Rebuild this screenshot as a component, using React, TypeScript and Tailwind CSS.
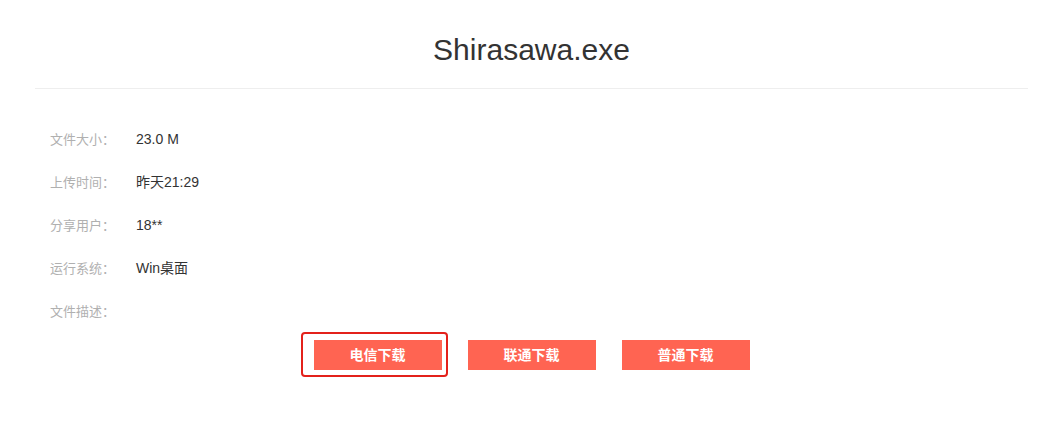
import * as React from "react";

const rows: { label: string; value: string }[] = [
  { label: "文件大小：", value: "23.0 M" },
  { label: "上传时间：", value: "昨天21:29" },
  { label: "分享用户：", value: "18**" },
  { label: "运行系统：", value: "Win桌面" },
  { label: "文件描述：", value: "" },
];

const buttons = ["电信下载", "联通下载", "普通下载"];

export default function App() {
  return (
    <div
      className="min-h-[441px] w-full bg-white pl-[35px] pr-[32px]"
      style={{ fontFamily: '"Liberation Sans", "Noto Sans CJK SC", sans-serif' }}
    >
      {/* 标题 */}
      <h1 className="pt-[35px] text-center text-[30px] leading-[30px] font-normal text-[#333]">
        Shirasawa.exe
      </h1>
      <div className="mt-[23px] h-px bg-[#eeeeee]" />

      {/* 文件信息 */}
      <div className="pt-[29px] pl-[15px]">
        {rows.map((r) => (
          <div key={r.label} className="flex h-[43px] items-center">
            <span className="w-[86px] text-[13px] text-[#b0b0b0]">{r.label}</span>
            <span className="text-[14px] text-[#333]">{r.value}</span>
          </div>
        ))}
      </div>

      {/* 下载按钮 */}
      <div className="mt-[7px] flex justify-center gap-[26px]">
        {buttons.map((b, i) => (
          <div key={b} className="relative">
            {i === 0 && (
              <div className="pointer-events-none absolute -top-[8px] -bottom-[7px] -left-[13px] -right-[6px] rounded-[4px] border-[2.5px] border-[#e3211b]" />
            )}
            <button className="h-[30px] w-[128px] bg-[#ff6452] text-[14px] font-bold text-white">
              {b}
            </button>
          </div>
        ))}
      </div>
    </div>
  );
}
